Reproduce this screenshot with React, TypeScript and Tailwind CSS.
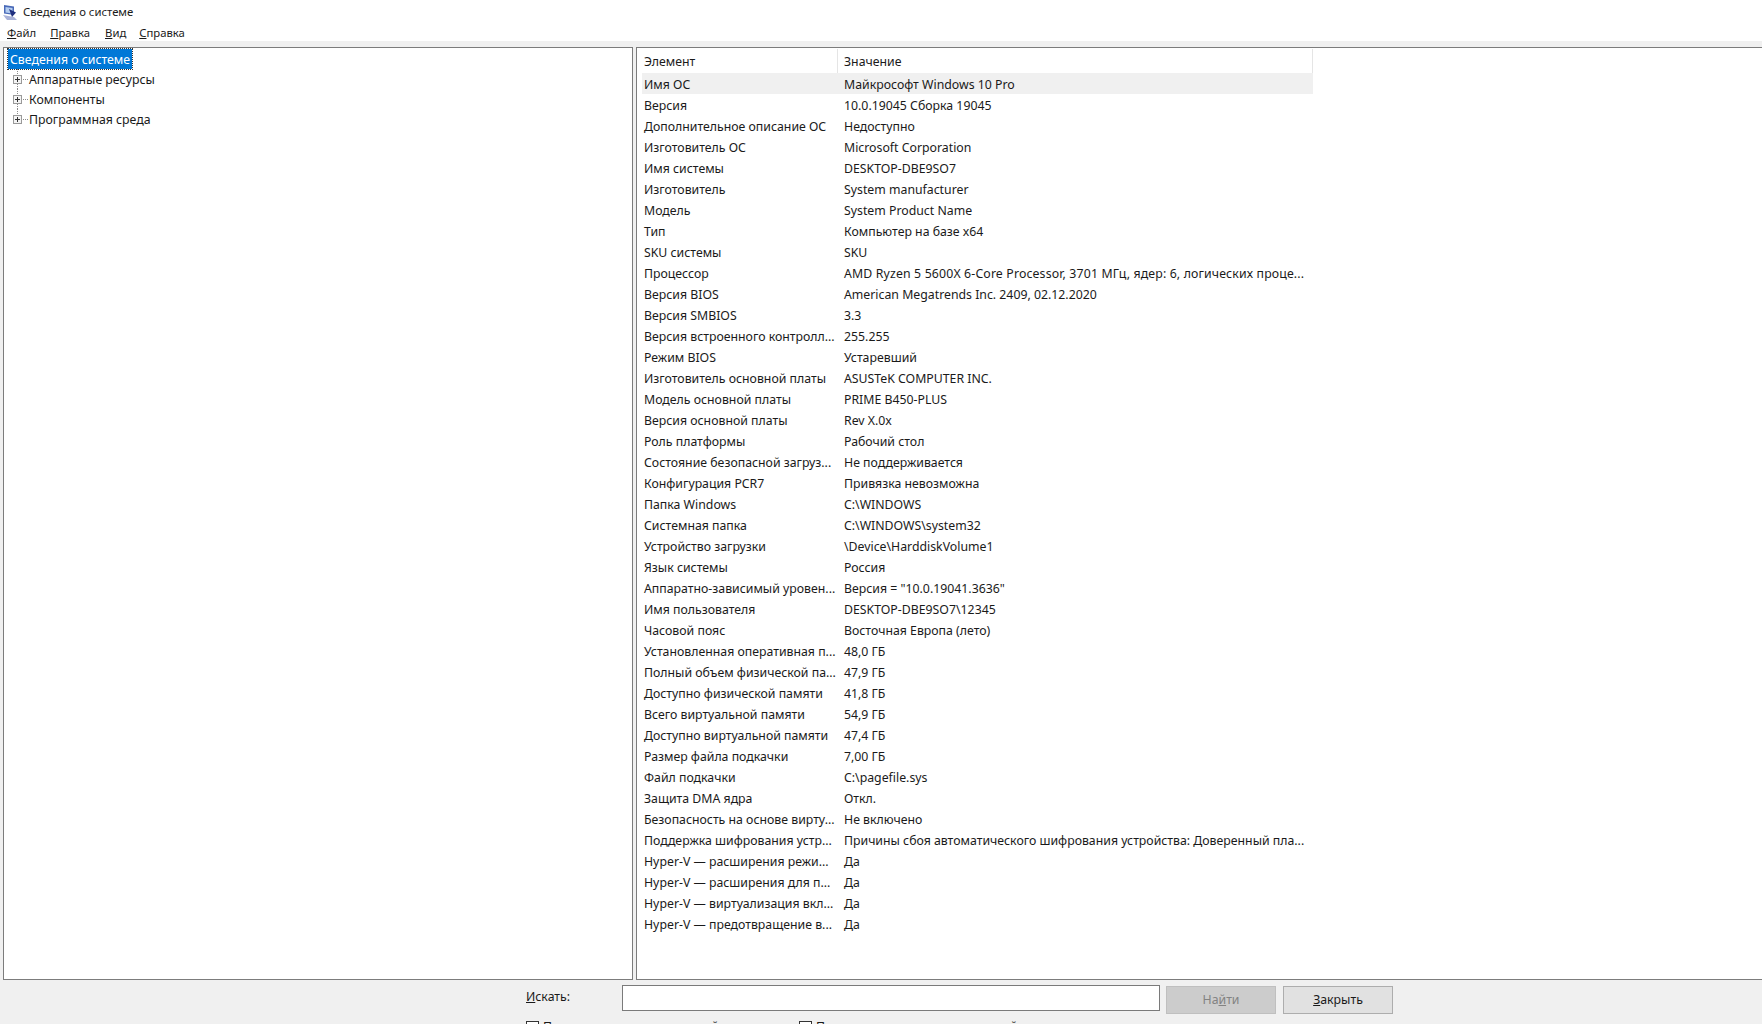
const font = "font-['Noto_Sans','Open_Sans',sans-serif]";

const rows: [string, string][] = [
  ["Имя ОС", "Майкрософт Windows 10 Pro"],
  ["Версия", "10.0.19045 Сборка 19045"],
  ["Дополнительное описание ОС", "Недоступно"],
  ["Изготовитель ОС", "Microsoft Corporation"],
  ["Имя системы", "DESKTOP-DBE9SO7"],
  ["Изготовитель", "System manufacturer"],
  ["Модель", "System Product Name"],
  ["Тип", "Компьютер на базе x64"],
  ["SKU системы", "SKU"],
  ["Процессор", "AMD Ryzen 5 5600X 6-Core Processor, 3701 МГц, ядер: 6, логических проце..."],
  ["Версия BIOS", "American Megatrends Inc. 2409, 02.12.2020"],
  ["Версия SMBIOS", "3.3"],
  ["Версия встроенного контролл...", "255.255"],
  ["Режим BIOS", "Устаревший"],
  ["Изготовитель основной платы", "ASUSTeK COMPUTER INC."],
  ["Модель основной платы", "PRIME B450-PLUS"],
  ["Версия основной платы", "Rev X.0x"],
  ["Роль платформы", "Рабочий стол"],
  ["Состояние безопасной загруз...", "Не поддерживается"],
  ["Конфигурация PCR7", "Привязка невозможна"],
  ["Папка Windows", "C:\\WINDOWS"],
  ["Системная папка", "C:\\WINDOWS\\system32"],
  ["Устройство загрузки", "\\Device\\HarddiskVolume1"],
  ["Язык системы", "Россия"],
  ["Аппаратно-зависимый уровен...", "Версия = \"10.0.19041.3636\""],
  ["Имя пользователя", "DESKTOP-DBE9SO7\\12345"],
  ["Часовой пояс", "Восточная Европа (лето)"],
  ["Установленная оперативная п...", "48,0 ГБ"],
  ["Полный объем физической па...", "47,9 ГБ"],
  ["Доступно физической памяти", "41,8 ГБ"],
  ["Всего виртуальной памяти", "54,9 ГБ"],
  ["Доступно виртуальной памяти", "47,4 ГБ"],
  ["Размер файла подкачки", "7,00 ГБ"],
  ["Файл подкачки", "C:\\pagefile.sys"],
  ["Защита DMA ядра", "Откл."],
  ["Безопасность на основе вирту...", "Не включено"],
  ["Поддержка шифрования устр...", "Причины сбоя автоматического шифрования устройства: Доверенный пла..."],
  ["Hyper-V — расширения режи...", "Да"],
  ["Hyper-V — расширения для п...", "Да"],
  ["Hyper-V — виртуализация вкл...", "Да"],
  ["Hyper-V — предотвращение в...", "Да"],
];

const TreeItem = ({ label, last }: { label: string; last?: boolean }) => (
  <div className="flex items-center h-[20px] pl-[5px]">
    <svg width="16" height="20" viewBox="0 0 16 20" className="shrink-0">
      <path d={last ? "M4.5 0V6" : "M4.5 0V6M4.5 15V20"} stroke="#8a8a8a" strokeDasharray="1 1" />
      <rect x="0.5" y="6.5" width="8" height="8" fill="#f4f4f4" stroke="#9a9a9a" />
      <path d="M2 10.5H7M4.5 8V13" stroke="#333" />
      <path d="M10 10.5H15" stroke="#8a8a8a" strokeDasharray="1 1" />
    </svg>
    <span className="pt-[2px]">{label}</span>
  </div>
);

const App = () => {
  return (
    <div className={`${font} relative w-[1762px] h-[1024px] overflow-hidden bg-[#f0f0f0] text-[12.3px] text-[#1a1a1a] flex flex-col`}>
      <div className="bg-white h-[41px] shrink-0 text-[11.3px]">
        <div className="flex items-center h-[24px] pl-[3px]">
          <svg width="15" height="16" viewBox="0 0 15 16">
            <path d="M1 1L11 2.5V11L1 9.5Z" fill="#4a6ab8" />
            <path d="M2.5 3L9.5 4V9.5L2.5 8.5Z" fill="#b4cdf0" />
            <path d="M0 11L11 13L14 16H4Z" fill="#a9b2d8" />
            <path d="M6 5L13 8.5L9 13Z" fill="#1f2f7e" />
          </svg>
          <span className="ml-[5px]">Сведения о системе</span>
        </div>
        <div className="flex items-center h-[17px] pt-[1px] pl-[7px] gap-[14px]">
          <span><u>Ф</u>айл</span>
          <span><u>П</u>равка</span>
          <span className="ml-[1px]"><u>В</u>ид</span>
          <span className="-ml-[1px]"><u>С</u>правка</span>
        </div>
      </div>

      <div className="flex h-[939px] shrink-0 pt-[6px] pl-[3px] gap-[3px]">
        <div className="w-[630px] border border-[#7c7c7c] bg-white pt-[1px] pl-[4px]">
          <div className="flex items-center w-fit h-[20px] px-[2px] pt-[2px] bg-[#0078d7] text-white outline-1 outline-dotted outline-[#333]">Сведения о системе</div>
          <TreeItem label="Аппаратные ресурсы" />
          <TreeItem label="Компоненты" />
          <TreeItem label="Программная среда" last />
        </div>

        <div className="flex-1 border border-r-0 border-[#7c7c7c] bg-white pl-[5px]">
          <div className="w-[671px]">
            <div className="flex h-[25px] pt-[1px]">
              <div className="w-[196px] pl-[2px] pt-[2px] border-r border-[#e5e5e5] flex items-center">Элемент</div>
              <div className="flex-1 pl-[6px] pt-[2px] border-r border-[#e5e5e5] flex items-center">Значение</div>
            </div>
            {rows.map(([name, value], i) => (
              <div key={i} className={`flex h-[21px] items-center pt-[3px] ${i === 0 ? "bg-[#f0f0f0]" : ""}`}>
                <div className="w-[196px] pl-[2px] whitespace-nowrap overflow-hidden">{name}</div>
                <div className={`flex-1 pl-[6px] whitespace-nowrap overflow-hidden ${i === 9 ? "tracking-[0.15px]" : ""}`}>{value}</div>
              </div>
            ))}
          </div>
        </div>
      </div>

      <div className="relative flex-1">
        <div className="flex items-start pl-[526px] pt-[5px]">
          <div className="w-[96px] h-[24px] flex items-center"><span><u>И</u>скать:</span></div>
          <div className="w-[538px] h-[26px] bg-white border border-[#7a7a7a]" />
          <button className="ml-[6px] mt-[1px] w-[110px] h-[28px] bg-[#cccccc] border border-[#bfbfbf] text-[#838383]">На<u>й</u>ти</button>
          <button className="ml-[7px] mt-[1px] w-[110px] h-[28px] bg-[#e1e1e1] border border-[#adadad]"><u>З</u>акрыть</button>
        </div>
        <div className="flex items-center pl-[526px] pt-[5px]">
          <div className="flex items-center w-[273px] h-[16px]">
            <span className="w-[13px] h-[13px] bg-white border border-[#333] mr-[4px]" />
            <span>Поиск только по выделенной категории</span>
          </div>
          <div className="flex items-center h-[16px]">
            <span className="w-[13px] h-[13px] bg-white border border-[#333] mr-[4px]" />
            <span>Поиск только в именах категорий</span>
          </div>
        </div>
      </div>
    </div>
  );
};

export default App;
